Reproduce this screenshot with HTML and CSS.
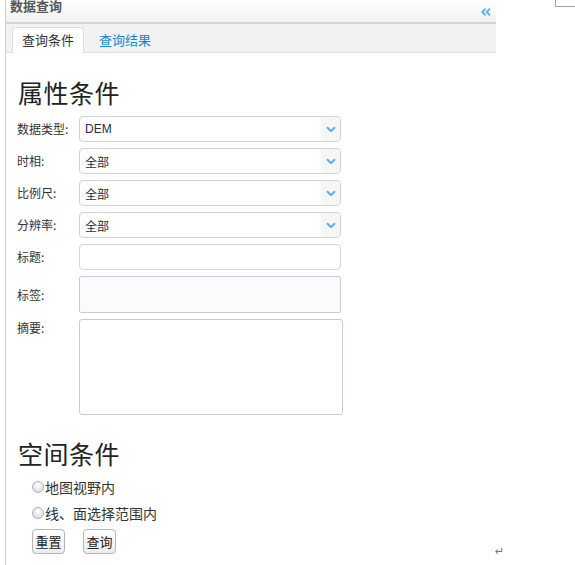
FILE: index.html
```html
<!DOCTYPE html>
<html lang="zh-CN">
<head>
<meta charset="utf-8">
<title>数据查询</title>
<link rel="stylesheet" href="styles.css">
</head>
<body>
<div class="corner-mark"></div>
<div class="panel">
  <div class="panel-header">
    <span class="panel-title">数据查询</span>
    <span class="collapse"><svg width="10" height="8" viewBox="0 0 10 8"><path d="M4.6 0.6 L1.2 4 L4.6 7.4 M9 0.6 L5.6 4 L9 7.4" fill="none" stroke="#5aaeee" stroke-width="1.8"/></svg></span>
  </div>
  <div class="tabs">
    <div class="tab active">查询条件</div>
    <div class="tab">查询结果</div>
  </div>
  <div class="content">
    <h2 class="section-title">属性条件</h2>
    <div class="form">
      <div class="row">
        <label class="label">数据类型:</label>
        <div class="select"><span class="select-text">DEM</span><span class="arrow"><svg width="10" height="7" viewBox="0 0 10 7"><path d="M1 1.2 L5 5.2 L9 1.2" fill="none" stroke="#5aaeea" stroke-width="2"/></svg></span></div>
      </div>
      <div class="row">
        <label class="label">时相:</label>
        <div class="select"><span class="select-text">全部</span><span class="arrow"><svg width="10" height="7" viewBox="0 0 10 7"><path d="M1 1.2 L5 5.2 L9 1.2" fill="none" stroke="#5aaeea" stroke-width="2"/></svg></span></div>
      </div>
      <div class="row">
        <label class="label">比例尺:</label>
        <div class="select"><span class="select-text">全部</span><span class="arrow"><svg width="10" height="7" viewBox="0 0 10 7"><path d="M1 1.2 L5 5.2 L9 1.2" fill="none" stroke="#5aaeea" stroke-width="2"/></svg></span></div>
      </div>
      <div class="row">
        <label class="label">分辨率:</label>
        <div class="select"><span class="select-text">全部</span><span class="arrow"><svg width="10" height="7" viewBox="0 0 10 7"><path d="M1 1.2 L5 5.2 L9 1.2" fill="none" stroke="#5aaeea" stroke-width="2"/></svg></span></div>
      </div>
      <div class="row">
        <label class="label">标题:</label>
        <div class="input"></div>
      </div>
      <div class="row">
        <label class="label">标签:</label>
        <div class="tagbox"></div>
      </div>
      <div class="row top">
        <label class="label">摘要:</label>
        <div class="textarea"></div>
      </div>
    </div>
    <h2 class="section-title space">空间条件</h2>
    <div class="radios">
      <div class="radio-row"><span class="radio"></span>地图视野内</div>
      <div class="radio-row"><span class="radio"></span>线、面选择范围内</div>
    </div>
    <div class="buttons">
      <button class="btn">重置</button>
      <button class="btn">查询</button>
    </div>
  </div>
</div>
<span class="para-mark">↵</span>
</body>
</html>
```
FILE: styles.css
```css
html, body {
  margin: 0;
  padding: 0;
  background: #ffffff;
  font-family: "Liberation Sans", "Noto Sans CJK SC", sans-serif;
  color: #333;
}
body {
  position: relative;
  width: 575px;
  height: 565px;
  overflow: hidden;
}
.corner-mark {
  position: absolute;
  left: 555px;
  top: 0;
  width: 20px;
  height: 6px;
  border-left: 1px solid #a0a0a0;
  border-bottom: 1px solid #a0a0a0;
}
.para-mark {
  position: absolute;
  left: 495px;
  top: 545px;
  font-size: 11px;
  color: #777;
  font-family: "DejaVu Sans", sans-serif;
}
.panel {
  margin-left: 5px;
  width: 491px;
  height: 565px;
  border-left: 1px solid #cfcfcf;
  box-sizing: border-box;
}
.panel-header {
  height: 22px;
  background: linear-gradient(#ffffff, #f1f1f1);
  border-bottom: 2px solid #d3d3d3;
  display: flex;
  justify-content: space-between;
  align-items: flex-start;
  padding: 0 4px 0 4px;
}
.panel-title {
  font-size: 13px;
  font-weight: bold;
  line-height: 14px;
  margin-top: 0;
  color: #555;
}
.collapse {
  display: flex;
  margin-top: 8px;
  margin-right: 1px;
}
.tabs {
  height: 28px;
  background: #f2f2f2;
  border-bottom: 1px solid #e0e0e0;
  display: flex;
  align-items: flex-end;
  gap: 5px;
  padding-left: 6px;
  box-sizing: content-box;
}
.tab {
  font-size: 13px;
  line-height: 24px;
  height: 24px;
  padding: 0 10px;
  color: #1a86d0;
  font-family: "Noto Sans CJK SC", sans-serif;
}
.tab.active {
  background: #ffffff;
  color: #333;
  border: 1px solid #dcdcdc;
  border-bottom: none;
  border-radius: 4px 4px 0 0;
  padding: 0 9px;
  margin-bottom: -1px;
  height: 25px;
}
.content {
  padding-left: 11px;
}
.section-title {
  font-family: "Noto Sans CJK SC", sans-serif;
  font-weight: normal;
  font-size: 25px;
  line-height: 30px;
  margin: 24px 0 0 1px;
  color: #222;
  letter-spacing: 0.5px;
}
.section-title.space {
  margin-top: 23px;
}
.form {
  margin-top: 9px;
  display: flex;
  flex-direction: column;
  gap: 6px;
}
.row {
  display: flex;
  align-items: center;
}
.row.top {
  align-items: flex-start;
}
.label {
  width: 62px;
  flex: none;
  font-size: 12px;
  line-height: 18px;
  color: #333;
  font-family: "Noto Sans CJK SC", sans-serif;
}
.select {
  width: 262px;
  height: 26px;
  box-sizing: border-box;
  border: 1px solid #d2d2d2;
  border-radius: 4px;
  display: flex;
  align-items: center;
  justify-content: space-between;
  overflow: hidden;
  background: #fff;
}
.select-text {
  font-size: 12px;
  padding-left: 5px;
  color: #2a2a3a;
  font-family: "Liberation Sans", "Noto Sans CJK SC", sans-serif;
}
.arrow {
  width: 19px;
  height: 100%;
  background: #f6f6f6;
  display: flex;
  align-items: center;
  justify-content: center;
}
.input {
  width: 262px;
  height: 26px;
  box-sizing: border-box;
  border: 1px solid #d4d4d4;
  border-radius: 4px;
  background: #fff;
}
.tagbox {
  width: 262px;
  height: 37px;
  box-sizing: border-box;
  border: 1px solid #c9ccd8;
  border-radius: 2px;
  background: #fbfbfd;
}
.textarea {
  width: 264px;
  height: 96px;
  box-sizing: border-box;
  border: 1px solid #c6cad9;
  border-radius: 3px;
  background: #fff;
}
.radios {
  margin-top: 6px;
  padding-left: 15px;
}
.radio-row {
  display: flex;
  align-items: center;
  height: 26px;
  font-size: 14px;
  color: #333;
  font-family: "Noto Sans CJK SC", sans-serif;
}
.radio {
  width: 12px;
  height: 12px;
  box-sizing: border-box;
  border-radius: 50%;
  border: 1px solid #b0b0b0;
  background: radial-gradient(circle at 50% 35%, #ffffff 0%, #e6e6e6 60%, #d0d0d0 100%);
  margin-right: 1px;
  margin-top: -1px;
}
.buttons {
  margin-top: 3px;
  padding-left: 15px;
  display: flex;
  gap: 18px;
}
.btn {
  width: 33px;
  height: 25px;
  padding: 0;
  font-size: 13px;
  font-family: "Noto Sans CJK SC", sans-serif;
  color: #222;
  border: 1px solid #b5b5b5;
  border-radius: 4px;
  background: linear-gradient(#ffffff, #ececec);
}
```
